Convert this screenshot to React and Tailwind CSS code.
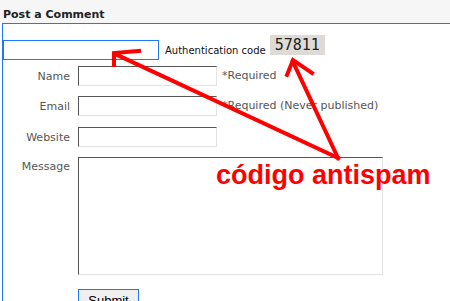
import React from 'react';

const inputCls = "h-[20px] bg-white border border-t-[#555] border-l-[#555] border-b-[#e3e3e3] border-r-[#e3e3e3]";

const Row = ({ label, children, top = false, className = '' }) => (
    <div className={`flex ${top ? 'items-start' : 'items-center'} ${className}`}>
        <div className={`w-[75px] pr-[8px] text-right text-[11px] leading-[13px] text-[#555] ${top ? 'mt-[3px]' : ''}`}>{label}</div>
        {children}
    </div>
);

const Annotations = () => (
    <svg className="absolute inset-0 pointer-events-none" width="450" height="301" viewBox="0 0 450 301">
        <g stroke="#ff0000" strokeWidth="4" fill="none" strokeLinecap="square" strokeLinejoin="miter">
            <line x1="338" y1="158" x2="115" y2="54" />
            <polyline points="139,51 114,53 114,65" />
            <line x1="338" y1="158" x2="293" y2="62" />
            <polyline points="287,75 293,60 312,73" />
        </g>
    </svg>
);

export default function App() {
    return (
        <div className="relative w-[450px] h-[301px] overflow-hidden bg-white" style={{ fontFamily: '"DejaVu Sans", Verdana, sans-serif' }}>
            <div className="h-[23px] bg-[#f6f6f6] pl-[3px] pt-[8px] text-[11px] leading-[13px] font-bold text-[#222]">Post a Comment</div>

            <div className="ml-[2px] border-l border-t border-[#1e78ff] h-[300px]">
                {/* auth row */}
                <div className="flex items-start pt-[11px]">
                    <div className="mt-[5px] w-[156px] h-[20px] border border-[#1e78ff] bg-white"></div>
                    <div className="ml-[6px] mt-[10px] text-[10px] leading-[12px] text-[#111]">Authentication code</div>
                    <div className="ml-[4px] w-[55px] h-[20px] bg-[#dedad5] flex items-center justify-center text-[15px] leading-none text-[#222]" style={{ fontFamily: '"DejaVu Sans Mono", monospace' }}>57811</div>
                </div>

                <div className="mt-[6px] flex flex-col gap-[10px]">
                    <Row label="Name">
                        <div className={`${inputCls} w-[139px]`}></div>
                        <span className="ml-[5px] text-[11px] text-[#555]">*Required</span>
                    </Row>
                    <Row label="Email">
                        <div className={`${inputCls} w-[139px]`}></div>
                        <span className="ml-[5px] text-[11px] text-[#555]">*Required (Never published)</span>
                    </Row>
                    <Row label="Website" className="mt-[1px]">
                        <div className={`${inputCls} w-[139px]`}></div>
                    </Row>
                    <Row label="Message" top>
                        <div className={`${inputCls} w-[305px] h-[118px]`}></div>
                    </Row>
                </div>

                <div className="pl-[75px] mt-[13px]">
                    <button className="w-[61px] h-[22px] border border-[#1e78ff] bg-[#efefef] text-[13px] leading-[15px] text-black pt-[1px]" style={{ fontFamily: '"Liberation Sans", Arial, sans-serif' }}>Submit</button>
                </div>
            </div>

            <Annotations />
            <div className="absolute left-[216px] top-[162px] text-[27px] leading-[27px] font-bold text-[#ff0000] whitespace-nowrap" style={{ fontFamily: '"Liberation Sans", Arial, sans-serif' }}>código antispam</div>
        </div>
    );
}
